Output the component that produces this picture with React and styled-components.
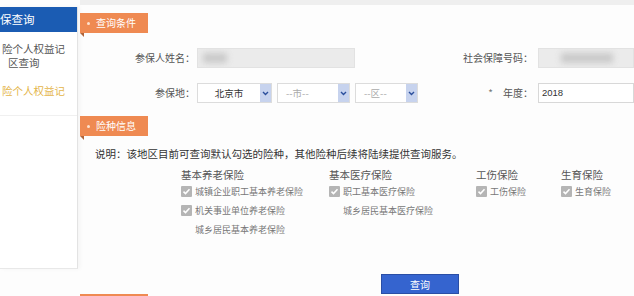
import React from 'react';
import styled, { createGlobalStyle } from 'styled-components';

const GlobalStyle = createGlobalStyle`
  html, body {
    margin: 0;
    padding: 0;
    background: #fdfdfd;
    font-family: "Noto Sans CJK SC", "Noto Sans", sans-serif;
    color: #444;
  }
`;

const Page = styled.div`
  display: flex;
  width: 634px;
  height: 296px;
  overflow: hidden;
`;

const Sidebar = styled.div`
  width: 77px;
  height: 261px;
  margin-top: 7px;
  background: #fff;
  border-right: 1px solid #e3e3e3;
  border-bottom: 1px solid #e8e8e8;
  box-shadow: 2px 0 4px rgba(0, 0, 0, 0.04);
  flex-shrink: 0;
`;

const SideHeader = styled.div`
  height: 25px;
  background: #1b5cb3;
  color: #fff;
  font-size: 11.5px;
  line-height: 25px;
`;

const SideItem = styled.div`
  padding: ${(p) => p.$pad || '10px 0 6px 2px'};
  font-size: 10.5px;
  line-height: 14px;
  color: ${(p) => (p.$active ? '#e4b54a' : '#555')};
  border-bottom: ${(p) => (p.$line ? '1px solid #f0f0f0' : 'none')};
`;

const Indent = styled.span`
  display: block;
  padding-left: 6px;
`;

const Main = styled.div`
  flex: 1;
  display: flex;
  flex-direction: column;
  border-top: 5px solid #efefef;
  margin-left: 2px;
  padding-top: 8px;
`;

const Tab = styled.div`
  position: relative;
  width: 68px;
  height: 20px;
  flex-shrink: 0;
  background: #ef8a52;
  color: #fff;
  font-size: 10px;
  line-height: 20px;
  display: flex;
  align-items: center;
  gap: 6px;
  padding-left: 7px;
  box-sizing: border-box;
  margin-top: ${(p) => p.$mt || 0}px;

  &::before {
    content: '';
    width: 3px;
    height: 3px;
    border-radius: 50%;
    background: #fde2cf;
  }

  &::after {
    content: '';
    position: absolute;
    left: 0;
    bottom: -4px;
    border-top: 4px solid #b0643a;
    border-left: 4px solid transparent;
  }
`;

const FormGrid = styled.div`
  display: grid;
  grid-template-columns: 115px 225px 113px 1fr;
  row-gap: 15px;
  margin-top: 15px;
  font-size: 10px;
`;

const Label = styled.div`
  text-align: right;
  line-height: 20px;
  color: #555;
  white-space: nowrap;
`;

const Star = styled.span`
  color: #777;
  margin-right: 10px;
`;

const Field = styled.div`
  height: 20px;
  margin-left: ${(p) => p.$ml || 2}px;
  display: flex;
  gap: 5px;
`;

const GrayInput = styled.div`
  width: ${(p) => p.$w || '100%'};
  height: 20px;
  background: #ebebeb;
  border: 1px solid #e2e2e2;
  box-sizing: border-box;
  display: flex;
  align-items: center;
  padding-left: ${(p) => p.$blurLeft || 6}px;
  overflow: hidden;
`;

const Redacted = styled.span`
  width: ${(p) => p.$w}px;
  height: 10px;
  background: #c9c9c9;
  filter: blur(3px);
`;

const TextInput = styled.div`
  flex: 1;
  height: 20px;
  background: #fff;
  border: 1px solid #d8d8d8;
  box-sizing: border-box;
  font-size: 9.5px;
  line-height: 18px;
  padding-left: 3px;
  color: #333;
  font-family: "Liberation Sans", sans-serif;
`;

const Select = styled.div`
  width: ${(p) => p.$w}px;
  height: 20px;
  background: #fff;
  border: 1px solid #dcdcdc;
  box-sizing: border-box;
  display: flex;
  font-size: 9.5px;
  color: ${(p) => (p.$placeholder ? '#aaa' : '#333')};
`;

const SelectText = styled.div`
  flex: 1;
  line-height: 18px;
  text-align: ${(p) => (p.$placeholder ? 'left' : 'center')};
  padding-left: ${(p) => (p.$placeholder ? 8 : 0)}px;
`;

const Arrow = styled.div`
  width: 11px;
  background: #c7d3ee;
  display: flex;
  align-items: center;
  justify-content: center;
`;

const Note = styled.div`
  margin-top: 11px;
  padding-left: 15px;
  font-size: 10.5px;
  line-height: 14px;
  color: #333;
`;

const InsGrid = styled.div`
  display: grid;
  grid-template-columns: 148px 147px 85px 1fr;
  margin-left: 101px;
  margin-top: 7px;
`;

const InsCol = styled.div`
  display: flex;
  flex-direction: column;
`;

const InsTitle = styled.div`
  font-size: 10.5px;
  line-height: 14px;
  color: #555;
  margin-bottom: 0;
`;

const InsItem = styled.div`
  display: flex;
  align-items: center;
  gap: 3px;
  height: 19px;
  font-size: 9px;
  color: #777;
  padding-left: ${(p) => (p.$noBox ? 14 : 0)}px;
`;

const Check = styled.span`
  width: 11px;
  height: 11px;
  border-radius: 1px;
  background: #b5b5b5;
  display: flex;
  align-items: center;
  justify-content: center;
`;

const ButtonRow = styled.div`
  display: flex;
  padding-left: 301px;
  margin-top: 35px;
`;

const QueryButton = styled.button`
  width: 78px;
  height: 20px;
  padding: 0;
  background: #3564cf;
  border: 1px solid #2a4ea5;
  color: #fff;
  font-family: inherit;
  font-size: 10px;
  cursor: pointer;
`;

const Chevron = () => (
  <svg width="7" height="5" viewBox="0 0 7 5">
    <path d="M1 1l2.5 2.5L6 1" fill="none" stroke="#2b4f9c" strokeWidth="1.4" />
  </svg>
);

const Tick = () => (
  <svg width="9" height="9" viewBox="0 0 9 9">
    <path d="M1.5 4.6l2 2 4-4.4" fill="none" stroke="#fff" strokeWidth="1.5" />
  </svg>
);

const groups = [
  { title: '基本养老保险', items: [['城镇企业职工基本养老保险', true], ['机关事业单位养老保险', true], ['城乡居民基本养老保险', false]] },
  { title: '基本医疗保险', items: [['职工基本医疗保险', true], ['城乡居民基本医疗保险', false]] },
  { title: '工伤保险', items: [['工伤保险', true]] },
  { title: '生育保险', items: [['生育保险', true]] },
];

const App = () => (
  <>
    <GlobalStyle />
    <Page>
      <Sidebar>
        <SideHeader>保查询</SideHeader>
        <SideItem>
          险个人权益记
          <Indent>区查询</Indent>
        </SideItem>
        <SideItem $active $line $pad="8px 0 17px 2px">险个人权益记</SideItem>
      </Sidebar>

      <Main>
        <Tab>查询条件</Tab>
        <FormGrid>
          <Label>参保人姓名：</Label>
          <Field>
            <GrayInput $w="158px" $blurLeft={5}>
              <Redacted $w={24} />
            </GrayInput>
          </Field>
          <Label>社会保障号码：</Label>
          <Field $ml={5}>
            <GrayInput $blurLeft={22}>
              <Redacted $w={52} />
            </GrayInput>
          </Field>

          <Label>参保地：</Label>
          <Field>
            <Select $w={75}>
              <SelectText>北京市</SelectText>
              <Arrow><Chevron /></Arrow>
            </Select>
            <Select $w={73} $placeholder>
              <SelectText $placeholder>--市--</SelectText>
              <Arrow><Chevron /></Arrow>
            </Select>
            <Select $w={63} $placeholder>
              <SelectText $placeholder>--区--</SelectText>
              <Arrow><Chevron /></Arrow>
            </Select>
          </Field>
          <Label><Star>*</Star>年度：</Label>
          <Field $ml={5}>
            <TextInput>2018</TextInput>
          </Field>
        </FormGrid>

        <Tab $mt={13}>险种信息</Tab>
        <Note>说明：该地区目前可查询默认勾选的险种，其他险种后续将陆续提供查询服务。</Note>

        <InsGrid>
          {groups.map((g) => (
            <InsCol key={g.title}>
              <InsTitle>{g.title}</InsTitle>
              {g.items.map(([name, checked]) => (
                <InsItem key={name} $noBox={!checked}>
                  {checked && <Check><Tick /></Check>}
                  {name}
                </InsItem>
              ))}
            </InsCol>
          ))}
        </InsGrid>

        <ButtonRow>
          <QueryButton>查询</QueryButton>
        </ButtonRow>
        <Tab $mt={0} />
      </Main>
    </Page>
  </>
);

export default App;
